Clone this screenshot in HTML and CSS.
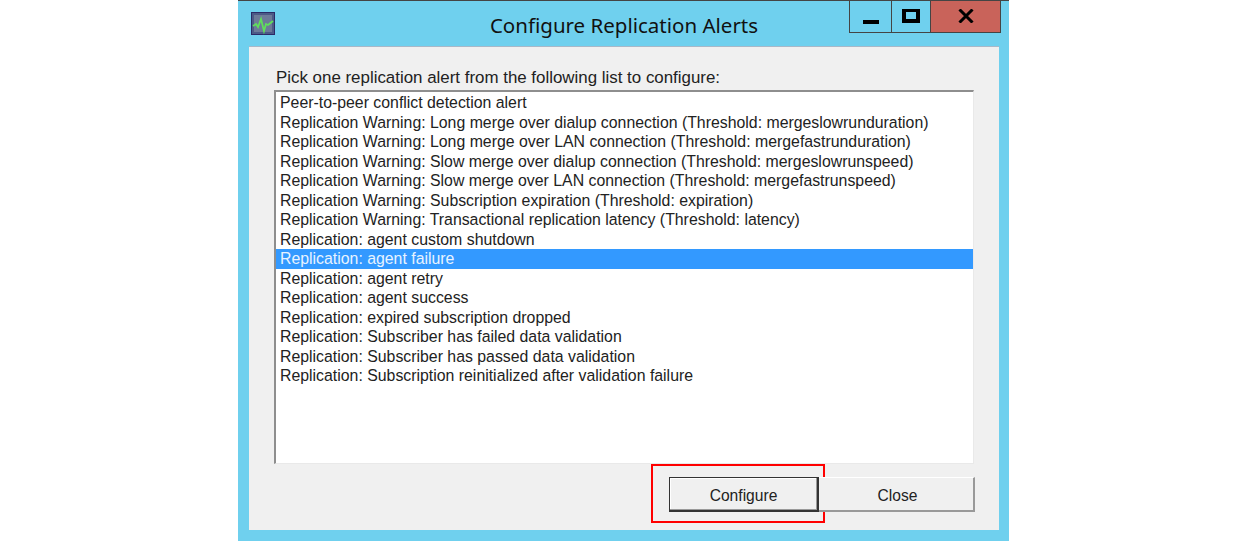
FILE: index.html
```html
<!DOCTYPE html>
<html lang="en">
<head>
<meta charset="utf-8">
<title>Configure Replication Alerts</title>
<link rel="stylesheet" href="styles.css">
</head>
<body>
<div class="window">
  <div class="titlebar">
    <div class="title-left">
      <svg class="app-icon" viewBox="0 0 24 23" aria-hidden="true">
        <rect x="0.5" y="0.5" width="23" height="22" fill="#4c5a86" stroke="#2c2a66"/>
        <rect x="3" y="3" width="18" height="17" fill="#6d7a98"/>
        <path d="M2 14l3-2 2 3 3-8 3 12 2-7 2 1 5-4" fill="none" stroke="#5fe05a" stroke-width="1.8"/>
      </svg>
    </div>
    <div class="title">Configure Replication Alerts</div>
    <div class="caption-buttons">
      <div class="cap cap-min"><span class="min-glyph"></span></div>
      <div class="cap cap-max"><span class="max-glyph"></span></div>
      <div class="cap cap-close">
        <svg class="close-glyph" viewBox="0 0 16 14" aria-hidden="true"><path d="M1.5 0.5L14.5 13.5M14.5 0.5L1.5 13.5" stroke="#000" stroke-width="3" fill="none"/></svg>
      </div>
    </div>
  </div>
  <div class="client">
    <div class="prompt">Pick one replication alert from the following list to configure:</div>
    <div class="listbox">
      <div class="row">Peer-to-peer conflict detection alert</div>
      <div class="row">Replication Warning: Long merge over dialup connection (Threshold: mergeslowrunduration)</div>
      <div class="row">Replication Warning: Long merge over LAN connection (Threshold: mergefastrunduration)</div>
      <div class="row">Replication Warning: Slow merge over dialup connection (Threshold: mergeslowrunspeed)</div>
      <div class="row">Replication Warning: Slow merge over LAN connection (Threshold: mergefastrunspeed)</div>
      <div class="row">Replication Warning: Subscription expiration (Threshold: expiration)</div>
      <div class="row">Replication Warning: Transactional replication latency (Threshold: latency)</div>
      <div class="row">Replication: agent custom shutdown</div>
      <div class="row selected">Replication: agent failure</div>
      <div class="row">Replication: agent retry</div>
      <div class="row">Replication: agent success</div>
      <div class="row">Replication: expired subscription dropped</div>
      <div class="row">Replication: Subscriber has failed data validation</div>
      <div class="row">Replication: Subscriber has passed data validation</div>
      <div class="row">Replication: Subscription reinitialized after validation failure</div>
    </div>
    <div class="actions">
      <div class="btn btn-default">Configure<span class="callout"></span></div>
      <div class="btn btn-close">Close</div>
    </div>
  </div>
</div>
</body>
</html>
```
FILE: styles.css
```css
html, body {
  margin: 0;
  padding: 0;
  background: #fff;
}
body {
  height: 541px;
  overflow: hidden;
  display: flex;
  justify-content: center;
  font-family: "Liberation Sans", Arial, sans-serif;
  color: #222;
}
.window {
  width: 771px;
  height: 541px;
  box-sizing: border-box;
  background: #6fd0ee;
  border-top: 1px solid #444;
  padding: 0 10px 11px 11px;
  display: flex;
  flex-direction: column;
}
.titlebar {
  height: 45px;
  display: grid;
  grid-template-columns: 1fr auto 1fr;
  align-items: start;
  margin-right: -2px;
}
.title-left {
  display: flex;
}
.app-icon {
  width: 24px;
  height: 23px;
  margin: 11px 0 0 2px;
  flex: none;
}
.title {
  font-family: "Noto Sans", "Open Sans", sans-serif;
  font-size: 20.5px;
  line-height: 26px;
  margin: 11px 0 0 -2px;
  color: #111;
}
.caption-buttons {
  display: flex;
  justify-self: end;
  height: 32px;
  box-sizing: border-box;
  border: 1px solid #444;
  border-top: 0;
}
.cap {
  display: flex;
  align-items: center;
  justify-content: center;
  box-sizing: border-box;
}
.cap-min {
  width: 42px;
  border-right: 1px solid #444;
}
.cap-max {
  width: 39px;
  border-right: 1px solid #444;
}
.cap-close {
  width: 69px;
  background: #c9635a;
}
.min-glyph {
  width: 16px;
  height: 4px;
  background: #000;
  margin-top: 10px;
}
.max-glyph {
  width: 18px;
  height: 14px;
  box-sizing: border-box;
  border: 3px solid #000;
  margin-top: -2px;
  border-width: 3px 4px 4px;
}
.close-glyph {
  width: 16px;
  height: 14px;
  margin-top: -1px;
}
.client {
  flex: 1;
  background: #f0f0f0;
  border-top: 1px solid #a8b8c8;
  padding: 21px 25px 0 25px;
  display: flex;
  flex-direction: column;
  box-sizing: border-box;
}
.prompt {
  font-size: 16.9px;
  line-height: 19px;
  height: 22px;
  padding-left: 2px;
}
.listbox {
  width: 700px;
  height: 374px;
  box-sizing: border-box;
  background: #fff;
  border-style: solid;
  border-width: 2px 1px 1px 2px;
  border-color: #8e8e8e #e9e9e9 #e9e9e9 #8e8e8e;
  padding-top: 1px;
  margin-bottom: 13px;
}
.row {
  height: 19.5px;
  line-height: 19.5px;
  font-size: 15.85px;
  padding-left: 4px;
  white-space: nowrap;
}
.selected {
  background: #3399ff;
  color: #e8f3ff;
}
.actions {
  display: flex;
  justify-content: flex-end;
  margin-right: -1px;
}
.btn {
  height: 35px;
  box-sizing: border-box;
  display: flex;
  align-items: center;
  justify-content: center;
  padding-top: 3px;
  font-size: 15.6px;
  position: relative;
  background: #f0f0f0;
}
.btn-default {
  width: 150px;
  border: 2px solid #333;
  border-left-width: 1px;
  border-top-width: 1px;
  box-shadow: inset -1px -1px 0 #999, inset 1px 1px 0 #fff;
}
.btn-close {
  width: 156px;
  padding-left: 3px;
  border-right: 2px solid #999;
  border-bottom: 2px solid #999;
  border-top: 1px solid #fff;
}
.callout {
  position: absolute;
  left: -19px;
  top: -14px;
  width: 174px;
  height: 59px;
  box-sizing: border-box;
  border: 2px solid #f00;
}
```
